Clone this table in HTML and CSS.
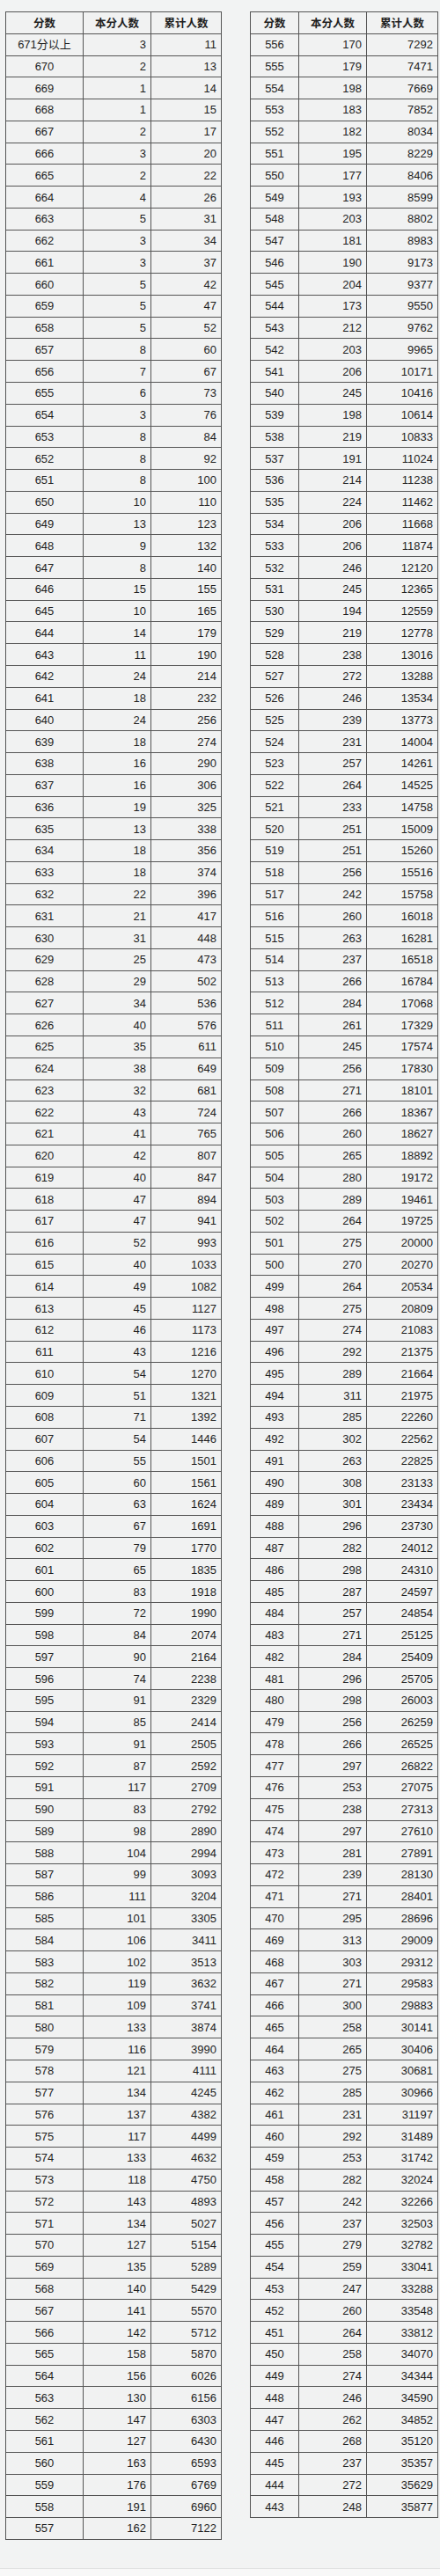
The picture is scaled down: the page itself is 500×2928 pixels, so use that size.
FILE: index.html
```html
<!DOCTYPE html>
<html lang="zh-CN">
<head>
<meta charset="utf-8">
<title>一分一段表</title>
<link rel="stylesheet" href="styles.css">
</head>
<body>
<main class="page">
<div class="panel panel-left">
<table class="score-table score-table-left">
<colgroup><col class="col-a"><col class="col-b"><col class="col-c"></colgroup>
<thead><tr><th>分数</th><th>本分人数</th><th>累计人数</th></tr></thead>
<tbody>
<tr><td>671分以上</td><td>3</td><td>11</td></tr>
<tr><td>670</td><td>2</td><td>13</td></tr>
<tr><td>669</td><td>1</td><td>14</td></tr>
<tr><td>668</td><td>1</td><td>15</td></tr>
<tr><td>667</td><td>2</td><td>17</td></tr>
<tr><td>666</td><td>3</td><td>20</td></tr>
<tr><td>665</td><td>2</td><td>22</td></tr>
<tr><td>664</td><td>4</td><td>26</td></tr>
<tr><td>663</td><td>5</td><td>31</td></tr>
<tr><td>662</td><td>3</td><td>34</td></tr>
<tr><td>661</td><td>3</td><td>37</td></tr>
<tr><td>660</td><td>5</td><td>42</td></tr>
<tr><td>659</td><td>5</td><td>47</td></tr>
<tr><td>658</td><td>5</td><td>52</td></tr>
<tr><td>657</td><td>8</td><td>60</td></tr>
<tr><td>656</td><td>7</td><td>67</td></tr>
<tr><td>655</td><td>6</td><td>73</td></tr>
<tr><td>654</td><td>3</td><td>76</td></tr>
<tr><td>653</td><td>8</td><td>84</td></tr>
<tr><td>652</td><td>8</td><td>92</td></tr>
<tr><td>651</td><td>8</td><td>100</td></tr>
<tr><td>650</td><td>10</td><td>110</td></tr>
<tr><td>649</td><td>13</td><td>123</td></tr>
<tr><td>648</td><td>9</td><td>132</td></tr>
<tr><td>647</td><td>8</td><td>140</td></tr>
<tr><td>646</td><td>15</td><td>155</td></tr>
<tr><td>645</td><td>10</td><td>165</td></tr>
<tr><td>644</td><td>14</td><td>179</td></tr>
<tr><td>643</td><td>11</td><td>190</td></tr>
<tr><td>642</td><td>24</td><td>214</td></tr>
<tr><td>641</td><td>18</td><td>232</td></tr>
<tr><td>640</td><td>24</td><td>256</td></tr>
<tr><td>639</td><td>18</td><td>274</td></tr>
<tr><td>638</td><td>16</td><td>290</td></tr>
<tr><td>637</td><td>16</td><td>306</td></tr>
<tr><td>636</td><td>19</td><td>325</td></tr>
<tr><td>635</td><td>13</td><td>338</td></tr>
<tr><td>634</td><td>18</td><td>356</td></tr>
<tr><td>633</td><td>18</td><td>374</td></tr>
<tr><td>632</td><td>22</td><td>396</td></tr>
<tr><td>631</td><td>21</td><td>417</td></tr>
<tr><td>630</td><td>31</td><td>448</td></tr>
<tr><td>629</td><td>25</td><td>473</td></tr>
<tr><td>628</td><td>29</td><td>502</td></tr>
<tr><td>627</td><td>34</td><td>536</td></tr>
<tr><td>626</td><td>40</td><td>576</td></tr>
<tr><td>625</td><td>35</td><td>611</td></tr>
<tr><td>624</td><td>38</td><td>649</td></tr>
<tr><td>623</td><td>32</td><td>681</td></tr>
<tr><td>622</td><td>43</td><td>724</td></tr>
<tr><td>621</td><td>41</td><td>765</td></tr>
<tr><td>620</td><td>42</td><td>807</td></tr>
<tr><td>619</td><td>40</td><td>847</td></tr>
<tr><td>618</td><td>47</td><td>894</td></tr>
<tr><td>617</td><td>47</td><td>941</td></tr>
<tr><td>616</td><td>52</td><td>993</td></tr>
<tr><td>615</td><td>40</td><td>1033</td></tr>
<tr><td>614</td><td>49</td><td>1082</td></tr>
<tr><td>613</td><td>45</td><td>1127</td></tr>
<tr><td>612</td><td>46</td><td>1173</td></tr>
<tr><td>611</td><td>43</td><td>1216</td></tr>
<tr><td>610</td><td>54</td><td>1270</td></tr>
<tr><td>609</td><td>51</td><td>1321</td></tr>
<tr><td>608</td><td>71</td><td>1392</td></tr>
<tr><td>607</td><td>54</td><td>1446</td></tr>
<tr><td>606</td><td>55</td><td>1501</td></tr>
<tr><td>605</td><td>60</td><td>1561</td></tr>
<tr><td>604</td><td>63</td><td>1624</td></tr>
<tr><td>603</td><td>67</td><td>1691</td></tr>
<tr><td>602</td><td>79</td><td>1770</td></tr>
<tr><td>601</td><td>65</td><td>1835</td></tr>
<tr><td>600</td><td>83</td><td>1918</td></tr>
<tr><td>599</td><td>72</td><td>1990</td></tr>
<tr><td>598</td><td>84</td><td>2074</td></tr>
<tr><td>597</td><td>90</td><td>2164</td></tr>
<tr><td>596</td><td>74</td><td>2238</td></tr>
<tr><td>595</td><td>91</td><td>2329</td></tr>
<tr><td>594</td><td>85</td><td>2414</td></tr>
<tr><td>593</td><td>91</td><td>2505</td></tr>
<tr><td>592</td><td>87</td><td>2592</td></tr>
<tr><td>591</td><td>117</td><td>2709</td></tr>
<tr><td>590</td><td>83</td><td>2792</td></tr>
<tr><td>589</td><td>98</td><td>2890</td></tr>
<tr><td>588</td><td>104</td><td>2994</td></tr>
<tr><td>587</td><td>99</td><td>3093</td></tr>
<tr><td>586</td><td>111</td><td>3204</td></tr>
<tr><td>585</td><td>101</td><td>3305</td></tr>
<tr><td>584</td><td>106</td><td>3411</td></tr>
<tr><td>583</td><td>102</td><td>3513</td></tr>
<tr><td>582</td><td>119</td><td>3632</td></tr>
<tr><td>581</td><td>109</td><td>3741</td></tr>
<tr><td>580</td><td>133</td><td>3874</td></tr>
<tr><td>579</td><td>116</td><td>3990</td></tr>
<tr><td>578</td><td>121</td><td>4111</td></tr>
<tr><td>577</td><td>134</td><td>4245</td></tr>
<tr><td>576</td><td>137</td><td>4382</td></tr>
<tr><td>575</td><td>117</td><td>4499</td></tr>
<tr><td>574</td><td>133</td><td>4632</td></tr>
<tr><td>573</td><td>118</td><td>4750</td></tr>
<tr><td>572</td><td>143</td><td>4893</td></tr>
<tr><td>571</td><td>134</td><td>5027</td></tr>
<tr><td>570</td><td>127</td><td>5154</td></tr>
<tr><td>569</td><td>135</td><td>5289</td></tr>
<tr><td>568</td><td>140</td><td>5429</td></tr>
<tr><td>567</td><td>141</td><td>5570</td></tr>
<tr><td>566</td><td>142</td><td>5712</td></tr>
<tr><td>565</td><td>158</td><td>5870</td></tr>
<tr><td>564</td><td>156</td><td>6026</td></tr>
<tr><td>563</td><td>130</td><td>6156</td></tr>
<tr><td>562</td><td>147</td><td>6303</td></tr>
<tr><td>561</td><td>127</td><td>6430</td></tr>
<tr><td>560</td><td>163</td><td>6593</td></tr>
<tr><td>559</td><td>176</td><td>6769</td></tr>
<tr><td>558</td><td>191</td><td>6960</td></tr>
<tr><td>557</td><td>162</td><td>7122</td></tr>
</tbody>
</table>
</div>
<div class="panel panel-right">
<table class="score-table score-table-right">
<colgroup><col class="col-a"><col class="col-b"><col class="col-c"></colgroup>
<thead><tr><th>分数</th><th>本分人数</th><th>累计人数</th></tr></thead>
<tbody>
<tr><td>556</td><td>170</td><td>7292</td></tr>
<tr><td>555</td><td>179</td><td>7471</td></tr>
<tr><td>554</td><td>198</td><td>7669</td></tr>
<tr><td>553</td><td>183</td><td>7852</td></tr>
<tr><td>552</td><td>182</td><td>8034</td></tr>
<tr><td>551</td><td>195</td><td>8229</td></tr>
<tr><td>550</td><td>177</td><td>8406</td></tr>
<tr><td>549</td><td>193</td><td>8599</td></tr>
<tr><td>548</td><td>203</td><td>8802</td></tr>
<tr><td>547</td><td>181</td><td>8983</td></tr>
<tr><td>546</td><td>190</td><td>9173</td></tr>
<tr><td>545</td><td>204</td><td>9377</td></tr>
<tr><td>544</td><td>173</td><td>9550</td></tr>
<tr><td>543</td><td>212</td><td>9762</td></tr>
<tr><td>542</td><td>203</td><td>9965</td></tr>
<tr><td>541</td><td>206</td><td>10171</td></tr>
<tr><td>540</td><td>245</td><td>10416</td></tr>
<tr><td>539</td><td>198</td><td>10614</td></tr>
<tr><td>538</td><td>219</td><td>10833</td></tr>
<tr><td>537</td><td>191</td><td>11024</td></tr>
<tr><td>536</td><td>214</td><td>11238</td></tr>
<tr><td>535</td><td>224</td><td>11462</td></tr>
<tr><td>534</td><td>206</td><td>11668</td></tr>
<tr><td>533</td><td>206</td><td>11874</td></tr>
<tr><td>532</td><td>246</td><td>12120</td></tr>
<tr><td>531</td><td>245</td><td>12365</td></tr>
<tr><td>530</td><td>194</td><td>12559</td></tr>
<tr><td>529</td><td>219</td><td>12778</td></tr>
<tr><td>528</td><td>238</td><td>13016</td></tr>
<tr><td>527</td><td>272</td><td>13288</td></tr>
<tr><td>526</td><td>246</td><td>13534</td></tr>
<tr><td>525</td><td>239</td><td>13773</td></tr>
<tr><td>524</td><td>231</td><td>14004</td></tr>
<tr><td>523</td><td>257</td><td>14261</td></tr>
<tr><td>522</td><td>264</td><td>14525</td></tr>
<tr><td>521</td><td>233</td><td>14758</td></tr>
<tr><td>520</td><td>251</td><td>15009</td></tr>
<tr><td>519</td><td>251</td><td>15260</td></tr>
<tr><td>518</td><td>256</td><td>15516</td></tr>
<tr><td>517</td><td>242</td><td>15758</td></tr>
<tr><td>516</td><td>260</td><td>16018</td></tr>
<tr><td>515</td><td>263</td><td>16281</td></tr>
<tr><td>514</td><td>237</td><td>16518</td></tr>
<tr><td>513</td><td>266</td><td>16784</td></tr>
<tr><td>512</td><td>284</td><td>17068</td></tr>
<tr><td>511</td><td>261</td><td>17329</td></tr>
<tr><td>510</td><td>245</td><td>17574</td></tr>
<tr><td>509</td><td>256</td><td>17830</td></tr>
<tr><td>508</td><td>271</td><td>18101</td></tr>
<tr><td>507</td><td>266</td><td>18367</td></tr>
<tr><td>506</td><td>260</td><td>18627</td></tr>
<tr><td>505</td><td>265</td><td>18892</td></tr>
<tr><td>504</td><td>280</td><td>19172</td></tr>
<tr><td>503</td><td>289</td><td>19461</td></tr>
<tr><td>502</td><td>264</td><td>19725</td></tr>
<tr><td>501</td><td>275</td><td>20000</td></tr>
<tr><td>500</td><td>270</td><td>20270</td></tr>
<tr><td>499</td><td>264</td><td>20534</td></tr>
<tr><td>498</td><td>275</td><td>20809</td></tr>
<tr><td>497</td><td>274</td><td>21083</td></tr>
<tr><td>496</td><td>292</td><td>21375</td></tr>
<tr><td>495</td><td>289</td><td>21664</td></tr>
<tr><td>494</td><td>311</td><td>21975</td></tr>
<tr><td>493</td><td>285</td><td>22260</td></tr>
<tr><td>492</td><td>302</td><td>22562</td></tr>
<tr><td>491</td><td>263</td><td>22825</td></tr>
<tr><td>490</td><td>308</td><td>23133</td></tr>
<tr><td>489</td><td>301</td><td>23434</td></tr>
<tr><td>488</td><td>296</td><td>23730</td></tr>
<tr><td>487</td><td>282</td><td>24012</td></tr>
<tr><td>486</td><td>298</td><td>24310</td></tr>
<tr><td>485</td><td>287</td><td>24597</td></tr>
<tr><td>484</td><td>257</td><td>24854</td></tr>
<tr><td>483</td><td>271</td><td>25125</td></tr>
<tr><td>482</td><td>284</td><td>25409</td></tr>
<tr><td>481</td><td>296</td><td>25705</td></tr>
<tr><td>480</td><td>298</td><td>26003</td></tr>
<tr><td>479</td><td>256</td><td>26259</td></tr>
<tr><td>478</td><td>266</td><td>26525</td></tr>
<tr><td>477</td><td>297</td><td>26822</td></tr>
<tr><td>476</td><td>253</td><td>27075</td></tr>
<tr><td>475</td><td>238</td><td>27313</td></tr>
<tr><td>474</td><td>297</td><td>27610</td></tr>
<tr><td>473</td><td>281</td><td>27891</td></tr>
<tr><td>472</td><td>239</td><td>28130</td></tr>
<tr><td>471</td><td>271</td><td>28401</td></tr>
<tr><td>470</td><td>295</td><td>28696</td></tr>
<tr><td>469</td><td>313</td><td>29009</td></tr>
<tr><td>468</td><td>303</td><td>29312</td></tr>
<tr><td>467</td><td>271</td><td>29583</td></tr>
<tr><td>466</td><td>300</td><td>29883</td></tr>
<tr><td>465</td><td>258</td><td>30141</td></tr>
<tr><td>464</td><td>265</td><td>30406</td></tr>
<tr><td>463</td><td>275</td><td>30681</td></tr>
<tr><td>462</td><td>285</td><td>30966</td></tr>
<tr><td>461</td><td>231</td><td>31197</td></tr>
<tr><td>460</td><td>292</td><td>31489</td></tr>
<tr><td>459</td><td>253</td><td>31742</td></tr>
<tr><td>458</td><td>282</td><td>32024</td></tr>
<tr><td>457</td><td>242</td><td>32266</td></tr>
<tr><td>456</td><td>237</td><td>32503</td></tr>
<tr><td>455</td><td>279</td><td>32782</td></tr>
<tr><td>454</td><td>259</td><td>33041</td></tr>
<tr><td>453</td><td>247</td><td>33288</td></tr>
<tr><td>452</td><td>260</td><td>33548</td></tr>
<tr><td>451</td><td>264</td><td>33812</td></tr>
<tr><td>450</td><td>258</td><td>34070</td></tr>
<tr><td>449</td><td>274</td><td>34344</td></tr>
<tr><td>448</td><td>246</td><td>34590</td></tr>
<tr><td>447</td><td>262</td><td>34852</td></tr>
<tr><td>446</td><td>268</td><td>35120</td></tr>
<tr><td>445</td><td>237</td><td>35357</td></tr>
<tr><td>444</td><td>272</td><td>35629</td></tr>
<tr><td>443</td><td>248</td><td>35877</td></tr>
</tbody>
</table>
</div>
</main>
<footer class="page-foot"></footer>
</body>
</html>
```

FILE: styles.css
```css
html, body {
  margin: 0;
  padding: 0;
}

body {
  background: #f8f8f8;
  font-family: "Liberation Sans", "Noto Sans CJK SC", sans-serif;
  color: #1e1e1e;
}

.page {
  height: 2919px;
  box-sizing: border-box;
  background: #f2f3f3;
  display: flex;
  align-items: flex-start;
  gap: 32px;
  padding: 13px 0 0 6px;
}

.panel {
  flex: none;
}

.page-foot {
  height: 8px;
  border-top: 1px solid #e1e2e2;
  background: #f8f8f8;
}

.score-table {
  border-collapse: collapse;
  table-layout: fixed;
  background: #f1f2f2;
  font-size: 13px;
  border: 1px solid #2e2e2e;
}

.score-table-left {
  width: 245px;
}

.score-table-right {
  width: 213px;
}

.score-table-left .col-a { width: 88px; }
.score-table-left .col-b { width: 77px; }
.score-table-left .col-c { width: 80px; }

.score-table-right .col-a { width: 55px; }
.score-table-right .col-b { width: 77px; }
.score-table-right .col-c { width: 81px; }

.score-table tr {
  height: 24.78px;
}

.score-table th,
.score-table td {
  border: 1px solid #555;
  padding: 0 5px;
  white-space: nowrap;
  line-height: 1;
  overflow: hidden;
}

.score-table th {
  font-family: "Noto Sans CJK SC", sans-serif;
  font-weight: bold;
  font-size: 12.5px;
  text-align: center;
  color: #1e1e1e;
}

.score-table td {
  text-align: right;
}

.score-table td:first-child {
  text-align: center;
}
```
